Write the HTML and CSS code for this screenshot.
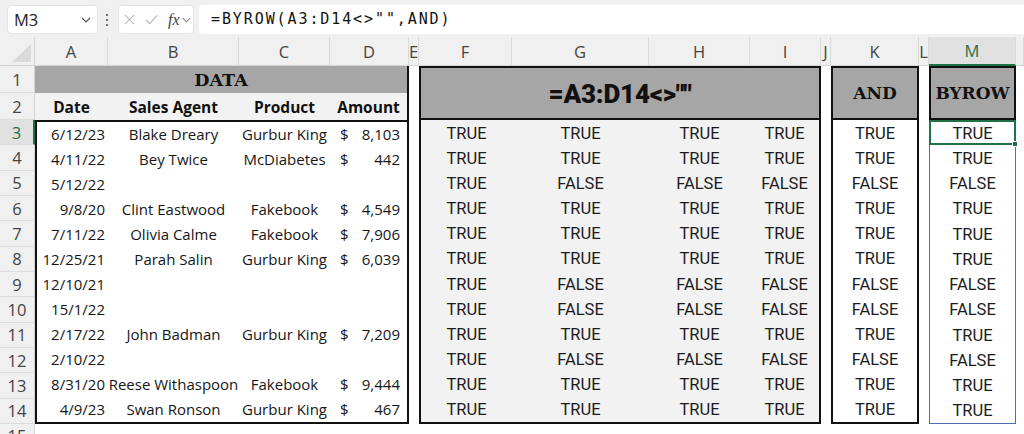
FILE: index.html
```html
<!DOCTYPE html>
<html lang="en">
<head>
    <meta charset="UTF-8">
    <meta name="viewport" content="width=device-width, initial-scale=1.0">
    <title>BYROW with AND</title>
    <link rel="stylesheet" href="styles.css">
</head>
<body>

    <div class="formula-bar">
        <div class="name-box">
            <span>M3</span>
            <svg class="chevron" viewBox="0 0 10 6"><path d="M1 1l4 4 4-4"/></svg>
        </div>
        <svg class="grip" viewBox="0 0 4 14">
            <circle cx="2" cy="2" r="1.1"/>
            <circle cx="2" cy="7" r="1.1"/>
            <circle cx="2" cy="12" r="1.1"/>
        </svg>
        <div class="fx-box">
            <svg class="cancel" viewBox="0 0 12 12"><path d="M1 1l10 10M11 1L1 11"/></svg>
            <svg class="enter" viewBox="0 0 14 11"><path d="M1 6l4 4 8-9"/></svg>
            <span class="fx">fx</span>
            <svg class="chevron small" viewBox="0 0 10 6"><path d="M1 1l4 4 4-4"/></svg>
        </div>
        <div class="formula">=BYROW(A3:D14&lt;&gt;"",AND)</div>
    </div>

    <div class="sheet">
        <div class="corner"></div>
        <div class="col-head">A</div>
        <div class="col-head">B</div>
        <div class="col-head">C</div>
        <div class="col-head">D</div>
        <div class="col-head">E</div>
        <div class="col-head">F</div>
        <div class="col-head">G</div>
        <div class="col-head">H</div>
        <div class="col-head">I</div>
        <div class="col-head">J</div>
        <div class="col-head">K</div>
        <div class="col-head">L</div>
        <div class="col-head active">M</div>
        <div class="col-head"></div>

        <div class="row-heads">
            <div class="row-num">1</div>
            <div class="row-num">2</div>
            <div class="row-num active">3</div>
            <div class="row-num">4</div>
            <div class="row-num">5</div>
            <div class="row-num">6</div>
            <div class="row-num">7</div>
            <div class="row-num">8</div>
            <div class="row-num">9</div>
            <div class="row-num">10</div>
            <div class="row-num">11</div>
            <div class="row-num">12</div>
            <div class="row-num">13</div>
            <div class="row-num">14</div>
            <div class="row-num">15</div>
        </div>

        <!-- source table -->
        <div class="block data">
            <div class="data-title">DATA</div>
            <div class="data-head">
                <div>Date</div>
                <div>Sales Agent</div>
                <div>Product</div>
                <div>Amount</div>
            </div>
            <div class="data-body">
                <div class="date">6/12/23</div><div class="text">Blake Dreary</div><div class="text">Gurbur King</div><div class="amount"><span>$</span><span>8,103</span></div>
                <div class="date">4/11/22</div><div class="text">Bey Twice</div><div class="text">McDiabetes</div><div class="amount"><span>$</span><span>442</span></div>
                <div class="date">5/12/22</div><div></div><div></div><div></div>
                <div class="date">9/8/20</div><div class="text">Clint Eastwood</div><div class="text">Fakebook</div><div class="amount"><span>$</span><span>4,549</span></div>
                <div class="date">7/11/22</div><div class="text">Olivia Calme</div><div class="text">Fakebook</div><div class="amount"><span>$</span><span>7,906</span></div>
                <div class="date">12/25/21</div><div class="text">Parah Salin</div><div class="text">Gurbur King</div><div class="amount"><span>$</span><span>6,039</span></div>
                <div class="date">12/10/21</div><div></div><div></div><div></div>
                <div class="date">15/1/22</div><div></div><div></div><div></div>
                <div class="date">2/17/22</div><div class="text">John Badman</div><div class="text">Gurbur King</div><div class="amount"><span>$</span><span>7,209</span></div>
                <div class="date">2/10/22</div><div></div><div></div><div></div>
                <div class="date">8/31/20</div><div class="text">Reese Withaspoon</div><div class="text">Fakebook</div><div class="amount"><span>$</span><span>9,444</span></div>
                <div class="date">4/9/23</div><div class="text">Swan Ronson</div><div class="text">Gurbur King</div><div class="amount"><span>$</span><span>467</span></div>
            </div>
        </div>

        <!-- =A3:D14<>"" spill -->
        <div class="block check">
            <div class="block-title wide">=A3:D14&lt;&gt;""</div>
            <div class="bool-body grey">
                <div>TRUE</div><div>TRUE</div><div>TRUE</div><div>TRUE</div>
                <div>TRUE</div><div>TRUE</div><div>TRUE</div><div>TRUE</div>
                <div>TRUE</div><div>FALSE</div><div>FALSE</div><div>FALSE</div>
                <div>TRUE</div><div>TRUE</div><div>TRUE</div><div>TRUE</div>
                <div>TRUE</div><div>TRUE</div><div>TRUE</div><div>TRUE</div>
                <div>TRUE</div><div>TRUE</div><div>TRUE</div><div>TRUE</div>
                <div>TRUE</div><div>FALSE</div><div>FALSE</div><div>FALSE</div>
                <div>TRUE</div><div>FALSE</div><div>FALSE</div><div>FALSE</div>
                <div>TRUE</div><div>TRUE</div><div>TRUE</div><div>TRUE</div>
                <div>TRUE</div><div>FALSE</div><div>FALSE</div><div>FALSE</div>
                <div>TRUE</div><div>TRUE</div><div>TRUE</div><div>TRUE</div>
                <div>TRUE</div><div>TRUE</div><div>TRUE</div><div>TRUE</div>
            </div>
        </div>

        <!-- AND over the whole range -->
        <div class="block and">
            <div class="block-title">AND</div>
            <div class="bool-body single">
                <div>TRUE</div><div>TRUE</div><div>FALSE</div><div>TRUE</div>
                <div>TRUE</div><div>TRUE</div><div>FALSE</div><div>FALSE</div>
                <div>TRUE</div><div>FALSE</div><div>TRUE</div><div>TRUE</div>
            </div>
        </div>

        <!-- BYROW result, M3 selected -->
        <div class="block byrow">
            <div class="block-title">BYROW</div>
            <div class="bool-body single spill">
                <div class="selected">TRUE<span class="fill-handle"></span></div>
                <div>TRUE</div><div>FALSE</div><div>TRUE</div>
                <div>TRUE</div><div>TRUE</div><div>FALSE</div><div>FALSE</div>
                <div>TRUE</div><div>FALSE</div><div>TRUE</div><div>TRUE</div>
            </div>
        </div>
    </div>

</body>
</html>
```

FILE: styles.css
```css
* {
    margin: 0;
    padding: 0;
    box-sizing: border-box;
}

body {
    font-family: "Open Sans", Arial, sans-serif;
    background: #fff;
    color: #1b1b1b;
    width: 1024px;
    height: 434px;
    overflow: hidden;
}

/* formula bar */

.formula-bar {
    height: 37px;
    background: #f0f0f0;
    display: flex;
    align-items: flex-start;
    padding: 5px 0 0 7px;
}

.name-box {
    width: 91px;
    height: 29px;
    background: #fff;
    border: 1px solid #e4e4e4;
    border-radius: 4px;
    display: flex;
    align-items: center;
    justify-content: space-between;
    padding: 0 6px 0 6px;
    font-size: 16.5px;
    color: #222;
}

.chevron {
    width: 10px;
    height: 6px;
    fill: none;
    stroke: #555;
    stroke-width: 1.2;
}

.chevron.small {
    width: 9px;
    stroke: #888;
}

.grip {
    width: 4px;
    height: 14px;
    margin: 8px 9px 0 7px;
    fill: #555;
}

.fx-box {
    width: 76px;
    height: 29px;
    background: #fff;
    border: 1px solid #e4e4e4;
    border-radius: 4px;
    display: flex;
    align-items: center;
    padding-left: 5px;
}

.cancel {
    width: 11px;
    height: 11px;
    fill: none;
    stroke: #b5b5b5;
    stroke-width: 1.1;
}

.enter {
    width: 13px;
    height: 11px;
    margin-left: 10px;
    fill: none;
    stroke: #b5b5b5;
    stroke-width: 1.1;
}

.fx {
    font-family: "Liberation Serif", "Times New Roman", serif;
    font-style: italic;
    font-size: 16px;
    color: #444;
    margin: 0 2px 0 10px;
}

.formula {
    flex: 1;
    height: 29px;
    margin-left: 5px;
    background: #fff;
    border-radius: 4px 0 0 4px;
    padding-left: 12px;
    font-family: "DejaVu Sans Mono", "Liberation Mono", monospace;
    font-size: 15px;
    letter-spacing: 1.9px;
    line-height: 29px;
    color: #111;
}

/* sheet grid */

.sheet {
    display: grid;
    grid-template-columns: 35px 73px 131px 91px 79px 10px 93px 137px 101px 71px 10px 88px 10px 87px 1fr;
    grid-template-rows: 29px 27px 27px repeat(12, 25.33px) 1fr;
    height: 397px;
}

.corner {
    background: #f0f0f0;
    border-right: 1px solid #d4d4d4;
    border-bottom: 1px solid #d4d4d4;
    position: relative;
}

.corner::after {
    content: "";
    position: absolute;
    right: 3px;
    bottom: 3px;
    border-style: solid;
    border-width: 0 0 18px 19px;
    border-color: transparent transparent #dadada transparent;
}

.col-head {
    background: #f0f0f0;
    border-right: 1px solid #dadada;
    border-bottom: 1px solid #d4d4d4;
    display: flex;
    align-items: center;
    justify-content: center;
    font-size: 16.5px;
    color: #444;
}

.col-head.active {
    background: #e1e1e1;
    color: #1e7145;
    border-bottom: 2px solid #1e7145;
}

.row-heads {
    grid-column: 1;
    grid-row: 2 / -1;
    display: grid;
    grid-template-rows: 27px 27px repeat(12, 25.33px) 1fr;
}

.row-num {
    background: #f0f0f0;
    border-right: 1px solid #d4d4d4;
    border-bottom: 1px solid #dcdcdc;
    display: flex;
    align-items: center;
    justify-content: center;
    font-size: 16.5px;
    color: #444;
}

.row-num.active {
    background: #e1e1e1;
    color: #1e7145;
    border-right: 2px solid #1e7145;
}

/* blocks */

.block {
    grid-row: 2 / 16;
    display: flex;
    flex-direction: column;
}

.data {
    grid-column: 2 / 6;
}

.check {
    grid-column: 7 / 11;
}

.and {
    grid-column: 12;
}

.byrow {
    grid-column: 14;
}

.data-title {
    height: 27px;
    background: #a6a6a6;
    border-right: 2px solid #111;
    display: flex;
    align-items: center;
    justify-content: center;
    font-family: "DejaVu Serif", Georgia, serif;
    font-weight: bold;
    font-size: 17.5px;
    color: #111;
}

.data-head {
    height: 27px;
    background: #f2f2f2;
    border-right: 2px solid #111;
    display: grid;
    grid-template-columns: 73px 131px 91px 1fr;
    align-items: center;
    text-align: center;
    font-weight: bold;
    font-size: 15.5px;
    color: #111;
}

.data-body {
    flex: 1;
    border: 2px solid #111;
    display: grid;
    grid-template-columns: 71px 131px 91px 1fr;
    grid-template-rows: repeat(12, 1fr);
    align-items: center;
    font-size: 15px;
    color: #161616;
    white-space: nowrap;
}

.data-body .date {
    text-align: right;
    padding-right: 3px;
}

.data-body .text {
    text-align: center;
}

.data-body .amount {
    display: flex;
    justify-content: space-between;
    padding: 0 7px 0 10px;
}

.check,
.and {
    border: 2px solid #111;
}

.block-title {
    height: 52px;
    background: #a6a6a6;
    border-bottom: 2px solid #111;
    display: flex;
    align-items: center;
    justify-content: center;
    font-family: "DejaVu Serif", Georgia, serif;
    font-weight: bold;
    font-size: 17px;
    color: #111;
}

.block-title.wide {
    font-family: Roboto, "Liberation Sans", sans-serif;
    font-weight: 900;
    font-size: 26px;
    letter-spacing: -0.2px;
    padding-top: 2px;
}

.byrow .block-title {
    height: 54px;
    border: 2px solid #111;
}

.bool-body {
    flex: 1;
    display: grid;
    grid-template-rows: repeat(12, 1fr);
    font-family: Roboto, Arial, sans-serif;
    font-size: 16.5px;
    color: #1b1b1b;
}

.bool-body.grey {
    background: #f2f2f2;
    grid-template-columns: 91px 137px 101px 1fr;
}

.bool-body > div {
    display: flex;
    align-items: center;
    justify-content: center;
    padding-top: 1px;
}

.bool-body.spill {
    border: 1px solid #4a6fb5;
    border-top: none;
}

.bool-body .selected {
    position: relative;
    border: 2px solid #1e7145;
    margin: 0 -1px;
}

.fill-handle {
    position: absolute;
    right: -4px;
    bottom: -4px;
    width: 6px;
    height: 6px;
    background: #1e7145;
    border: 1px solid #fff;
}
```
